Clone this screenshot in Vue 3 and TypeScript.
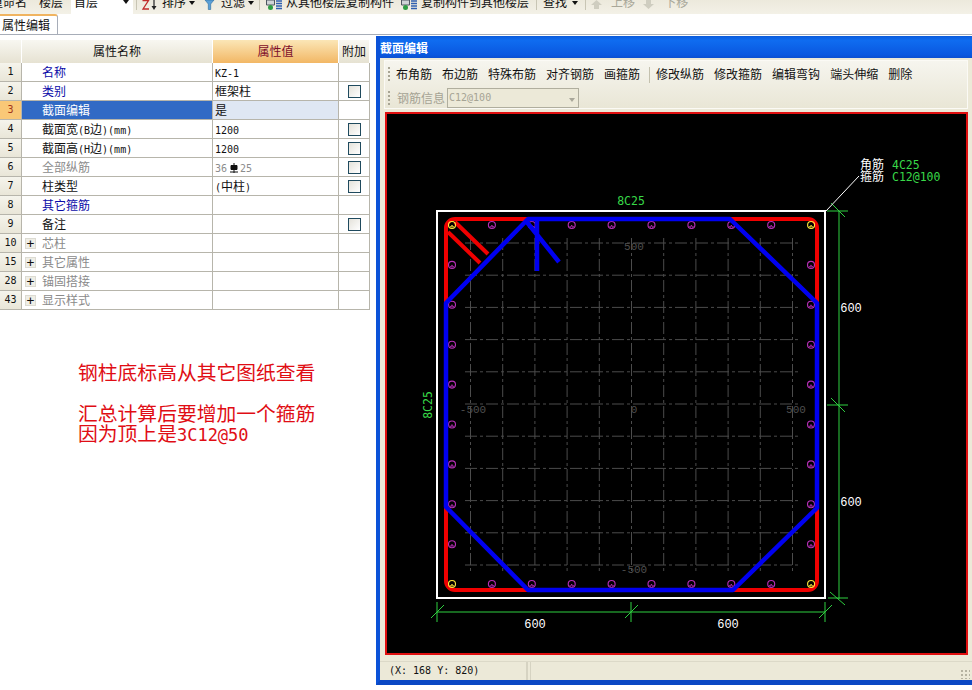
<script setup lang="ts">
interface Row {
  no: string
  name: string
  value?: string
  kind?: 'link' | 'muted' | 'group'
  check?: boolean
  selected?: boolean
  rebar?: boolean
}

const rows: Row[] = [
  { no: '1', name: '名称', value: 'KZ-1', kind: 'link' },
  { no: '2', name: '类别', value: '框架柱', kind: 'link', check: true },
  { no: '3', name: '截面编辑', value: '是', selected: true },
  { no: '4', name: '截面宽(B边)(mm)', value: '1200', check: true },
  { no: '5', name: '截面高(H边)(mm)', value: '1200', check: true },
  { no: '6', name: '全部纵筋', kind: 'muted', check: true, rebar: true },
  { no: '7', name: '柱类型', value: '(中柱)', check: true },
  { no: '8', name: '其它箍筋', kind: 'link' },
  { no: '9', name: '备注', check: true },
  { no: '10', name: '芯柱', kind: 'group' },
  { no: '15', name: '其它属性', kind: 'group' },
  { no: '28', name: '锚固搭接', kind: 'group' },
  { no: '43', name: '显示样式', kind: 'group' }
]

// Latin runs are set in a half-width face so that mixed text keeps its cell widths.
function runs(text = ''): { t: string; lat: boolean }[] {
  return (text.match(/[\x00-\x7f]+|[^\x00-\x7f]+/g) ?? []).map((t) => ({
    t,
    lat: t.charCodeAt(0) < 128
  }))
}

const firstTools = ['布角筋', '布边筋', '特殊布筋', '对齐钢筋', '画箍筋']
const secondTools = ['修改纵筋', '修改箍筋', '编辑弯钩', '端头伸缩', '删除']

const steps = Array.from({ length: 11 }, (_, i) => i)
const gridX = steps.map((i) => 470.5 + i * 32.2)
const gridY = steps.map((i) => 243 + i * 32.2)

const barStops = Array.from({ length: 10 }, (_, i) => i)
const barX = barStops.map((i) => 452 + i * 39.9)
const barY = barStops.map((i) => 225 + i * 39.9)

const bars: { x: number; y: number; corner: boolean }[] = []
barX.forEach((x, i) => {
  const corner = i === 0 || i === 9
  bars.push({ x, y: 225, corner })
  bars.push({ x, y: 584, corner })
})
barY.slice(1, 9).forEach((y) => {
  bars.push({ x: 452, y, corner: false })
  bars.push({ x: 811, y, corner: false })
})
</script>

<template>
  <div class="page">
    <div class="topbar">
      <span class="tool first">重命名</span>
      <span class="tool floor">楼层</span>
      <span class="combo"><span>首层</span><i class="caret"></i></span>
      <i class="sep s1"></i>
      <svg class="icon sort" width="17" height="10" viewBox="0 0 17 10">
        <path d="M1.500 .5h6L2 9h6" fill="none" stroke="#c02a2a" stroke-width="1.300" />
        <path d="M13 0v8" stroke="#333" stroke-width="1.300" />
        <path d="M10.500 6h5L13 10z" fill="#222" />
      </svg>
      <span class="tool">排序</span><i class="caret menu"></i>
      <svg class="icon filter" width="11" height="10" viewBox="0 0 11 10">
        <path d="M1 0h9L6.700 4v5.500H4.300V4z" fill="#5aa0d8" stroke="#2a6a9c" stroke-width=".6" />
      </svg>
      <span class="tool">过滤</span><i class="caret menu"></i>
      <i class="sep s2"></i>
      <svg class="icon copy" width="16" height="10" viewBox="0 0 16 10">
        <path d="M.5 0h8v5h-8z" fill="#cfd3d6" stroke="#4e5660" />
        <circle cx="4.500" cy="7.500" r="2.500" fill="#2f9e44" />
        <path d="M10 1h6M10 3.500h6M10 6h6M10 8.500h6" stroke="#2f5fb0" stroke-width="1.300" />
      </svg>
      <span class="tool copy-text">从其他楼层复制构件</span>
      <svg class="icon copy" width="16" height="10" viewBox="0 0 16 10">
        <path d="M.5 0h8v5h-8z" fill="#cfd3d6" stroke="#4e5660" />
        <circle cx="4.500" cy="7.500" r="2.500" fill="#2f9e44" />
        <path d="M10 1h6M10 3.500h6M10 6h6M10 8.500h6" stroke="#2f5fb0" stroke-width="1.300" />
      </svg>
      <span class="tool">复制构件到其他楼层</span>
      <i class="sep s3"></i>
      <span class="tool">查找</span><i class="caret menu wide"></i>
      <i class="sep s4"></i>
      <svg class="icon up" width="11" height="10" viewBox="0 0 11 10">
        <path d="M5.500 0L11 5H8v4H3V5H0z" fill="#cfcdc0" />
      </svg>
      <span class="tool off">上移</span>
      <svg class="icon down" width="11" height="10" viewBox="0 0 11 10">
        <path d="M5.500 9L0 4h3V0h5v4h3z" fill="#cfcdc0" />
      </svg>
      <span class="tool off">下移</span>
    </div>

    <div class="tabbar">
      <div class="tab">属性编辑</div>
    </div>

    <div class="main">
      <section class="left">
        <div class="grid">
          <div class="row head">
            <div class="no"></div>
            <div class="name-head">属性名称</div>
            <div class="value-head">属性值</div>
            <div class="add-head">附加</div>
          </div>
          <div v-for="r in rows" :key="r.no" class="row" :class="{ selected: r.selected }">
            <div class="no">{{ r.no }}</div>
            <div class="name" :class="r.kind">
              <span v-if="r.kind === 'group'" class="plus">+</span>
              <span class="label"><span v-for="(p, i) in runs(r.name)" :key="i" :class="{ lat: p.lat }">{{ p.t }}</span></span>
            </div>
            <div class="value" :class="r.kind">
              <template v-if="r.rebar">
                <span class="lat">36</span><svg class="bar-mark" width="8" height="10" viewBox="0 0 8 10"><path d="M4 0v10M1 2.500h6v4H1z M0 9h8" fill="#111" stroke="#111" stroke-width="1" /></svg><span class="lat">25</span>
              </template>
              <template v-else><span v-for="(p, i) in runs(r.value)" :key="i" :class="{ lat: p.lat }">{{ p.t }}</span></template>
            </div>
            <div class="add"><span v-if="r.check" class="check"></span></div>
          </div>
        </div>

        <div class="notes">
          <p class="note first-note">钢柱底标高从其它图纸查看</p>
          <p class="note">汇总计算后要增加一个箍筋</p>
          <p class="note">因为顶上是<span class="note-lat">3C12@50</span></p>
        </div>
      </section>

      <section class="window">
        <header class="title">截面编辑</header>
        <div class="window-body">
          <div class="bands">
            <div class="band">
              <i class="grip"></i>
              <span v-for="t in firstTools" :key="t" class="btn">{{ t }}</span>
              <i class="band-sep"></i>
              <span v-for="t in secondTools" :key="t" class="btn">{{ t }}</span>
            </div>
            <div class="band second">
              <i class="grip"></i>
              <span class="info">钢筋信息</span>
              <span class="info-combo">C12@100<i class="caret pale"></i></span>
            </div>
          </div>

          <div class="canvas">
            <svg class="drawing" width="579" height="539" viewBox="387 114 579 539">
              <g class="grid-lines">
                <line v-for="x in gridX" :key="'v' + x" :x1="x" y1="238" :x2="x" y2="572" />
                <line v-for="y in gridY" :key="'h' + y" x1="465" :y1="y" x2="798" :y2="y" />
              </g>
              <g class="axis">
                <text x="634" y="250" text-anchor="middle">500</text>
                <text x="473" y="413" text-anchor="middle">-500</text>
                <text x="634" y="413" text-anchor="middle">0</text>
                <text x="796" y="413" text-anchor="middle">500</text>
                <text x="634" y="573" text-anchor="middle">-500</text>
              </g>

              <rect x="437" y="211" width="388" height="387" fill="none" stroke="#fff" stroke-width="2" />
              <rect x="446" y="219" width="371" height="371" rx="9" fill="none" stroke="#f00000" stroke-width="4" />
              <path d="M455 222L488 254M448 232L480 263" stroke="#f00000" stroke-width="4" />

              <g>
                <template v-for="(b, i) in bars" :key="i">
                  <circle :cx="b.x" :cy="b.y" r="3.500" fill="none" :stroke="b.corner ? '#ffe93c' : '#b82fb8'" stroke-width="1.100" />
                  <path :d="`M${b.x - 2} ${b.y + 1}l1 1.500l1 -2.500l1 2.500l1 -1.500`" fill="none" :stroke="b.corner ? '#ffe93c' : '#b82fb8'" stroke-width=".8" />
                </template>
              </g>

              <path d="M528 219H730L817 303V508L733 590H528L446 507V303Z" fill="none" stroke="#0000f0" stroke-width="4.500" stroke-linejoin="round" />
              <path d="M526 221L559 262M537 219V271" fill="none" stroke="#0000f0" stroke-width="4.500" />

              <g class="dims">
                <path d="M839 211V599M827 211H848M831 203L845 217M827 405H848M831 398L845 412M828 598H848M830 592L845 605" />
                <path d="M437 612H825M437 602V622M431 618L444 605M631 602V622M625 618L638 605M825 602V622M819 618L832 605" />
              </g>
              <line x1="826" y1="211" x2="859" y2="176" stroke="#fff" stroke-width="1" />

              <text class="green" x="631" y="205" text-anchor="middle">8C25</text>
              <text class="green" transform="translate(432 405) rotate(-90)" text-anchor="middle">8C25</text>
              <text class="green" x="892" y="169">4C25</text>
              <text class="green" x="892" y="181">C12@100</text>
              <text class="cjk" x="860" y="169">角筋</text>
              <text class="cjk" x="860" y="181">箍筋</text>

              <text class="dim" x="851" y="312" text-anchor="middle">600</text>
              <text class="dim" x="851" y="506" text-anchor="middle">600</text>
              <text class="dim" x="535" y="628" text-anchor="middle">600</text>
              <text class="dim" x="728" y="628" text-anchor="middle">600</text>
            </svg>
          </div>

          <footer class="status">
            <div class="coords">(X: 168 Y: 820)</div>
            <div class="status-rest"><i class="resize"></i></div>
          </footer>
        </div>
      </section>
    </div>
  </div>
</template>

<style scoped>
.page {
  width: 972px;
  height: 690px;
  overflow: hidden;
  display: flex;
  flex-direction: column;
  background: #fff;
  font: 12px/14px "Noto Sans CJK SC", "DejaVu Sans", sans-serif;
  color: #111;
}
.lat { font: 10px/14px "DejaVu Sans Mono", monospace; }

.topbar {
  height: 14px;
  flex: none;
  display: flex;
  align-items: flex-end;
  overflow: hidden;
  padding-bottom: 5px;
  box-sizing: border-box;
  background: linear-gradient(#ece9dc, #f3f1e7);
}
.tool {
  flex: none;
  white-space: nowrap;
  line-height: 14px;
}
.tool.first { margin-left: -9px; }
.tool.floor { margin-left: 12px; }
.combo {
  flex: none;
  width: 62px;
  height: 24px;
  margin: 0 0 -5px 8px;
  box-sizing: border-box;
  padding: 5px 0 0 3px;
  background: #fff;
  position: relative;
}
.combo span { display: block; line-height: 14px; }
.combo .caret { position: absolute; right: 4px; top: 10px; }
.caret {
  display: block;
  width: 0;
  height: 0;
  border: 3.500px solid transparent;
  border-top: 4px solid #111;
  border-bottom: 0;
}
.caret.menu {
  flex: none;
  margin: 0 0 4px 3px;
  border-left-width: 3px;
  border-right-width: 3px;
}
.caret.menu.wide { margin-left: 5px; }
.caret.pale {
  position: absolute;
  right: 3px;
  top: 9px;
  border-top-color: #a9a79a;
}
.sep {
  flex: none;
  width: 1px;
  height: 16px;
  margin-bottom: -1px;
  background: #c8c5b4;
}
.s1 { margin: 0 4px -1px 3px; }
.s2 { margin: 0 6px -1px 5px; }
.s3 { margin: 0 6px -1px 7px; }
.s4 { margin: 0 5px -1px 7px; }
.icon { flex: none; display: block; margin-bottom: -1px; }
.sort { margin-right: 4px; }
.filter { margin-left: 9px; margin-right: 6px; }
.copy { margin-right: 4px; }
.copy-text { margin-right: 7px; }
.up { margin-right: 9px; }
.down { margin-left: 8px; margin-right: 10px; }
.off { color: #a9a799; }

.tabbar {
  height: 20px;
  flex: none;
  background: #fff;
  border-bottom: 1px solid #a7adb8;
}
.tab {
  width: 58px;
  height: 20px;
  box-sizing: border-box;
  padding: 2px 0 0 2px;
  background: #fff;
  border-top: 2px solid #f0b460;
  border-right: 1px solid #a7adb8;
  border-top-right-radius: 3px;
  line-height: 14px;
}

.main {
  flex: 1;
  min-height: 0;
  display: flex;
}
.left {
  width: 376px;
  flex: none;
}
.grid {
  width: 370px;
  margin-top: 5px;
}
.row {
  display: grid;
  grid-template-columns: 22px 191px 126px 31px;
  height: 19px;
  box-sizing: border-box;
  border-bottom: 1px solid #b7b5ab;
  line-height: 18px;
}
.row > div {
  border-right: 1px solid #b7b5ab;
  min-width: 0;
  white-space: nowrap;
  overflow: hidden;
}
.row.head {
  height: 23px;
  line-height: 22px;
  border-bottom: 0;
}
.row.head > div {
  text-align: center;
  background: linear-gradient(#f8f7f1, #e6e2d2);
  border-right: 1px solid #fff;
}
.row.head .value-head {
  background: linear-gradient(#fbe6b6, #f2b765);
  color: #7d0e2a;
}
.no {
  text-align: center;
  background: linear-gradient(#f5f4ec, #e9e6d8);
  font: 10px/18px "DejaVu Sans Mono", monospace;
}
.name { padding-left: 20px; }
.name.link { color: #0b0ba8; }
.name.muted, .value.muted { color: #8c8c8c; }
.name.group { color: #8a8a8a; padding-left: 3px; display: flex; align-items: center; }
.plus {
  flex: none;
  width: 11px;
  height: 11px;
  margin-right: 6px;
  box-sizing: border-box;
  border: 1px solid #dcdbd2;
  background: #efeee6;
  color: #111;
  font: 13px/9px "DejaVu Sans Mono", monospace;
  text-align: center;
}
.value { padding-left: 2px; }
.add { position: relative; }
.check {
  position: absolute;
  left: 9px;
  top: 3px;
  width: 13px;
  height: 13px;
  box-sizing: border-box;
  border: 1px solid #1f4a5e;
  background: linear-gradient(135deg, #e4e2da, #fff);
}
.bar-mark { margin: 0 2px 0 3px; vertical-align: -1px; }
.selected .no { background: #f9c877; color: #a3361a; }
.selected .name { background: #316ac5; color: #fff; }
.selected .value { background: #dfe7f3; }

.notes {
  margin-top: 52px;
  padding-left: 78px;
  color: #e00d14;
  font-size: 19.800px;
  line-height: 20px;
}
.note { margin: 0; white-space: nowrap; }
.first-note { margin-bottom: 21px; }
.note-lat { font: 17px/20px "DejaVu Sans Mono", monospace; }

.window {
  flex: none;
  width: 596px;
  height: 649px;
  margin-top: 1px;
  box-sizing: border-box;
  display: flex;
  flex-direction: column;
  border-left: 4px solid #0b52d8;
  border-bottom: 5px solid #0b48c4;
  background: #0b52d8;
}
.title {
  flex: none;
  height: 22px;
  background: linear-gradient(#0a5bdc, #0f6cf0 20%, #0a58e0 85%, #0b4fd0);
  color: #fff;
  font-weight: 700;
  line-height: 23px;
}
.window-body {
  flex: 1;
  min-height: 0;
  display: flex;
  flex-direction: column;
  background: #ece9d8;
  padding: 2px 0 0 0;
}
.bands {
  flex: none;
  margin: 0 4px;
  height: 49px;
  background: linear-gradient(#f6f5ee, #e9e6d6);
  border: 1px solid #fbfaf5;
  box-sizing: border-box;
}
.band {
  height: 27px;
  display: flex;
  align-items: center;
  padding-left: 3px;
}
.band.second { height: 20px; }
.grip {
  flex: none;
  width: 2px;
  height: 15px;
  margin-right: 6px;
  background: repeating-linear-gradient(#a8a594 0 2px, transparent 2px 4px);
}
.btn { flex: none; margin-right: 10px; position: relative; top: -1px; }
.band-sep {
  flex: none;
  width: 1px;
  height: 16px;
  margin: 0 6px 0 -1px;
  background: #c4c1ae;
}
.info { flex: none; color: #a5a394; margin-left: 1px; }
.info-combo {
  position: relative;
  flex: none;
  width: 132px;
  height: 20px;
  margin-left: 2px;
  box-sizing: border-box;
  border: 1px solid #b0ae9e;
  padding-left: 1px;
  color: #a5a394;
  font: 10px/17px "DejaVu Sans Mono", monospace;
  background: #ece9d8;
}

.canvas {
  flex: none;
  width: 583px;
  height: 543px;
  margin: 3px 0 0 5px;
  box-sizing: border-box;
  border: 2px solid #e01010;
  background: #000;
}
.drawing { display: block; }
.grid-lines line {
  stroke: #4c4c4c;
  stroke-width: 1;
  stroke-dasharray: 12 3 3 3;
}
.axis text {
  fill: #4f4f4f;
  font: 11px "Liberation Mono", monospace;
}
.dims path {
  fill: none;
  stroke: #2fd040;
  stroke-width: 1;
}
.green {
  fill: #38d848;
  font: 11.500px "DejaVu Sans Mono", monospace;
}
.cjk {
  fill: #fff;
  font: 12px "Noto Sans CJK SC", sans-serif;
}
.dim {
  fill: #fff;
  font: 12px "Liberation Mono", monospace;
}

.status {
  flex: 1;
  min-height: 0;
  margin-top: 6px;
  display: flex;
  border-top: 1px solid #dcd9c8;
  background: #ece9d8;
}
.coords {
  width: 148px;
  flex: none;
  padding-left: 9px;
  box-sizing: border-box;
  border-right: 2px solid #d6d3c2;
  font: 10px/18px "DejaVu Sans Mono", monospace;
}
.status-rest { flex: 1; position: relative; margin-left: 2px; border-left: 1px solid #d6d3c2; }
.resize {
  position: absolute;
  right: 2px;
  bottom: 1px;
  width: 10px;
  height: 10px;
  background: radial-gradient(circle, #b5b2a1 1px, transparent 1.200px) 0 0 / 4px 4px;
}
</style>
